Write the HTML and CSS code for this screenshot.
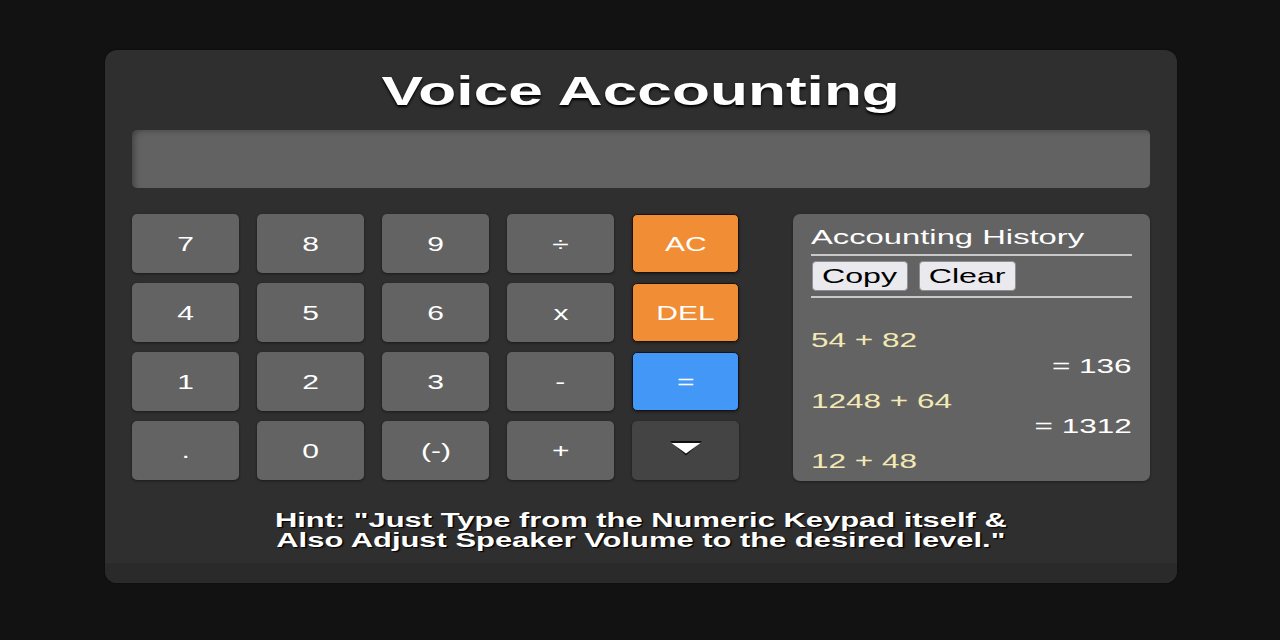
FILE: index.html
```html
<!DOCTYPE html>
<html lang="en">
<head>
<meta charset="utf-8">
<title>Voice Accounting</title>
<link rel="stylesheet" href="styles.css">
</head>
<body>
<main class="app">
  <div class="app-body">
    <h1 class="title"><span class="sx">Voice Accounting</span></h1>
    <div class="display"></div>
    <div class="main">
      <div class="keypad">
        <button class="key"><span class="sx">7</span></button>
        <button class="key"><span class="sx">8</span></button>
        <button class="key"><span class="sx">9</span></button>
        <button class="key"><span class="sx">÷</span></button>
        <button class="key key-orange"><span class="sx">AC</span></button>
        <button class="key"><span class="sx">4</span></button>
        <button class="key"><span class="sx">5</span></button>
        <button class="key"><span class="sx">6</span></button>
        <button class="key"><span class="sx">x</span></button>
        <button class="key key-orange"><span class="sx">DEL</span></button>
        <button class="key"><span class="sx">1</span></button>
        <button class="key"><span class="sx">2</span></button>
        <button class="key"><span class="sx">3</span></button>
        <button class="key"><span class="sx">-</span></button>
        <button class="key key-blue"><span class="sx">=</span></button>
        <button class="key"><span class="sx">.</span></button>
        <button class="key"><span class="sx">0</span></button>
        <button class="key"><span class="sx">(-)</span></button>
        <button class="key"><span class="sx">+</span></button>
        <button class="key key-dark" aria-label="Expand">
          <svg class="arrow" width="32" height="15" viewBox="0 0 32 15">
            <polygon points="0,0 32,0 16,14.5" fill="#111"/>
            <polygon points="1.5,2 30.5,2 16,12.5" fill="#fff"/>
          </svg>
        </button>
      </div>
      <section class="history">
        <h2 class="history-title"><span class="sx sx-left">Accounting History</span></h2>
        <hr class="rule">
        <div class="history-actions">
          <button class="small-btn btn-copy"><span class="sx">Copy</span></button>
          <button class="small-btn btn-clear"><span class="sx">Clear</span></button>
        </div>
        <hr class="rule">
        <div class="history-list">
          <div class="entry">
            <div class="expr"><span class="sx sx-left">54 + 82</span></div>
            <div class="result"><span class="sx sx-right">= 136</span></div>
          </div>
          <div class="entry">
            <div class="expr"><span class="sx sx-left">1248 + 64</span></div>
            <div class="result"><span class="sx sx-right">= 1312</span></div>
          </div>
          <div class="entry">
            <div class="expr"><span class="sx sx-left">12 + 48</span></div>
          </div>
        </div>
      </section>
    </div>
    <p class="hint"><span class="sx">Hint: "Just Type from the Numeric Keypad itself &amp;<br>Also Adjust Speaker Volume to the desired level."</span></p>
  </div>
  <div class="footer-band"></div>
</main>
</body>
</html>
```
FILE: styles.css
```css
* { box-sizing: border-box; }

html, body {
  margin: 0;
  padding: 0;
  height: 640px;
  overflow: hidden;
  background: #121212;
  font-family: "Liberation Sans", Arial, sans-serif;
  color: #fff;
}

.sx {
  display: inline-block;
  transform: scaleX(1.55);
  transform-origin: center;
  white-space: nowrap;
}
.sx-left { transform-origin: left center; }
.sx-right { transform-origin: right center; }

.app {
  width: 1072px;
  margin: 50px 0 0 105px;
  background: #2f2f2f;
  border-radius: 12px;
  overflow: hidden;
  box-shadow: 0 0 2px rgba(0, 0, 0, 0.6);
}

.app-body {
  padding: 0 27px;
}

.title {
  margin: 0;
  height: 80px;
  padding-top: 1px;
  line-height: 80px;
  text-align: center;
  font-size: 40px;
  font-weight: bold;
  text-shadow: 0 2px 2px #000;
}
.title .sx { transform: scaleX(1.555); }

.display {
  height: 58px;
  background: #626262;
  border-radius: 5px;
  box-shadow: inset 5px 3px 6px -3px rgba(0, 0, 0, 0.35);
}

.main {
  display: flex;
  gap: 54px;
  margin-top: 26px;
}

.keypad {
  display: grid;
  grid-template-columns: repeat(5, 107px);
  grid-auto-rows: 59px;
  column-gap: 18px;
  row-gap: 10px;
}

.key {
  border: none;
  margin: 0;
  padding: 0 0 0 0;
  background: #636363;
  color: #fff;
  border-radius: 5px;
  font-family: "Liberation Sans", Arial, sans-serif;
  font-size: 20px;
  display: flex;
  align-items: center;
  justify-content: center;
  padding-top: 2px;
  box-shadow: 0 1px 3px rgba(0, 0, 0, 0.45);
}
.key .sx { transform: scaleX(1.5); }

.key-orange {
  background: #f08d35;
  border: 1px solid #1a1410;
}
.key-blue {
  background: #4397f6;
  border: 1px solid #16121a;
}
.key-dark {
  background: #444444;
  padding-top: 0;
  padding-bottom: 4px;
}
.arrow { display: block; }

.history {
  flex: 1;
  height: 267px;
  background: #636363;
  border-radius: 7px;
  padding: 10px 18px 0;
  overflow: hidden;
  box-shadow: 0 1px 3px rgba(0, 0, 0, 0.35);
}

.history-title {
  margin: 0;
  font-size: 21px;
  font-weight: normal;
  line-height: 26px;
}
.history-title .sx { transform: scaleX(1.56); }

.rule {
  margin: 4px 0 0;
  height: 2px;
  border: none;
  background: #c9c9c9;
}

.history-actions {
  display: flex;
  gap: 11px;
  margin: 5px 0 5px 1px;
}

.small-btn {
  height: 30px;
  margin: 0;
  padding: 0;
  border: 1px solid #8e8e96;
  border-radius: 4px;
  background: #e9e9ee;
  color: #000;
  font-family: "Liberation Sans", Arial, sans-serif;
  font-size: 21px;
  display: flex;
  align-items: center;
  justify-content: center;
}
.small-btn .sx { transform: scaleX(1.53); }
.btn-copy { width: 96px; }
.btn-clear { width: 97px; }

.history-list {
  margin-top: 30px;
  display: flex;
  flex-direction: column;
  gap: 9.5px;
  font-size: 20px;
  line-height: 25.5px;
}

.expr { color: #f3e9b4; }
.result { text-align: right; color: #fff; }
.history-list .sx { transform: scaleX(1.575); }

.hint {
  margin: 29px 0 0;
  height: 53px;
  text-align: center;
  font-size: 20px;
  font-weight: bold;
  line-height: 20px;
  text-shadow: 1px 1px 1px #000;
}
.hint .sx { transform: scaleX(1.545); }

.footer-band {
  height: 20px;
  background: #2a2a2a;
}
```
